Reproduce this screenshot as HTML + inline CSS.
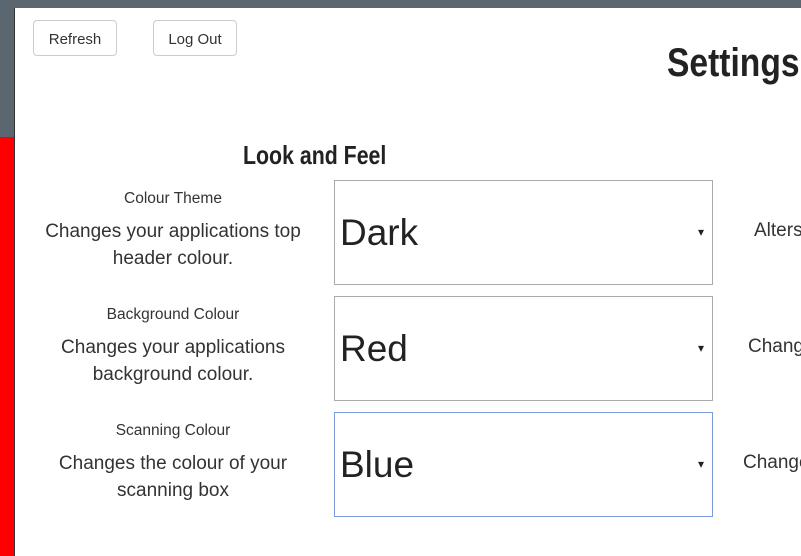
<!DOCTYPE html>
<html><head><style>
html,body{margin:0;width:801px;height:556px;overflow:hidden}
body{background:#5b6770;font-family:"Liberation Sans",sans-serif;position:relative}
.red{position:absolute;left:0;top:137px;width:14px;height:419px;background:#f00}
.panel{position:absolute;left:14px;top:8px;width:800px;height:548px;background:#fff;border-left:1px solid #333}
.btn{position:absolute;top:12px;height:34px;border:1px solid #ccc;border-radius:4px;font-size:15px;color:#333;line-height:37px;text-align:center;background:#fff}
h1{position:absolute;margin:0;left:652px;top:33px;font-size:40px;font-family:"Liberation Sans Narrow","Liberation Sans",sans-serif;font-weight:bold;color:#222;transform:scaleX(.84);transform-origin:left}
h2{position:absolute;margin:0;left:228px;top:132px;font-size:26px;font-family:"Liberation Sans Narrow","Liberation Sans",sans-serif;font-weight:bold;color:#222;transform:scaleX(.82);transform-origin:left}
.lbl{position:absolute;left:18px;width:280px;text-align:center;font-size:15.5px;color:#333}
.desc{position:absolute;left:8px;width:300px;text-align:center;font-size:19px;color:#333;line-height:27px}
.sel{position:absolute;left:319px;font-size:37px;color:#222;line-height:103px;padding-left:5px;box-sizing:border-box;width:379px;height:105px;border:1px solid #aaa}
.sel:after{content:"▾";position:absolute;right:8px;top:0;font-size:12px}
.r{position:absolute;font-size:19px;color:#333}
</style></head><body>
<div class="red"></div>
<div class="panel">
<div class="btn" style="left:18px;width:82px">Refresh</div>
<div class="btn" style="left:138px;width:82px">Log Out</div>
<h1>Settings</h1>
<h2>Look and Feel</h2>
<div class="lbl" style="top:182px">Colour Theme</div>
<div class="desc" style="top:210px">Changes your applications top header colour.</div>
<div class="sel" style="top:172px">Dark</div>
<div class="r" style="left:739px;top:212px">Alters</div>
<div class="lbl" style="top:298px">Background Colour</div>
<div class="desc" style="top:326px">Changes your applications background colour.</div>
<div class="sel" style="top:288px">Red</div>
<div class="r" style="left:733px;top:328px">Chang</div>
<div class="lbl" style="top:414px">Scanning Colour</div>
<div class="desc" style="top:442px">Changes the colour of your scanning box</div>
<div class="sel" style="top:404px;border-color:#7a9be0">Blue</div>
<div class="r" style="left:728px;top:444px">Change</div>
</div>
</body></html>
